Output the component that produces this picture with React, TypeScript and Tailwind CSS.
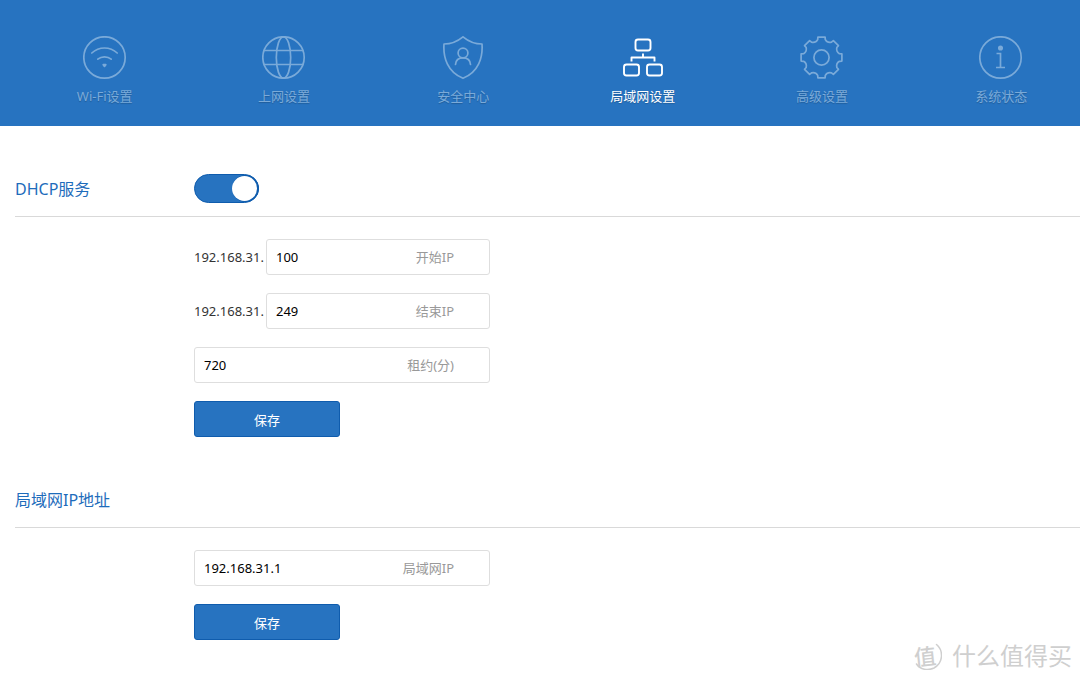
import React, { useState } from "react";

const navItems = [
  { id: "wifi", label: "Wi-Fi设置", icon: <WifiIcon /> },
  { id: "wan", label: "上网设置", icon: <GlobeIcon /> },
  { id: "safe", label: "安全中心", icon: <ShieldIcon /> },
  { id: "lan", label: "局域网设置", icon: <LanIcon /> },
  { id: "advanced", label: "高级设置", icon: <GearIcon /> },
  { id: "status", label: "系统状态", icon: <InfoIcon /> },
];

function Icon({ children }: { children: React.ReactNode }) {
  return (
    <svg
      width="44"
      height="44"
      viewBox="0 0 44 44"
      fill="none"
      stroke="currentColor"
      strokeWidth="1.7"
      strokeLinecap="round"
      strokeLinejoin="round"
      aria-hidden="true"
    >
      {children}
    </svg>
  );
}

function WifiIcon() {
  return (
    <Icon>
      <circle cx="21.5" cy="21.5" r="20.7" />
      <path d="M8.8 17C16 10.3 27 10.3 34.2 17" />
      <path d="M14.8 23.2C18.5 20 24.5 20 28.2 23.2" />
      <path d="M20.2 28.7h2.6l-1.3 1.7z" fill="currentColor" />
    </Icon>
  );
}

function GlobeIcon() {
  return (
    <Icon>
      <circle cx="21.5" cy="21.5" r="20.7" />
      <ellipse cx="21.5" cy="21.5" rx="7.2" ry="20.7" />
      <path d="M2.2 14.5h38.6M2.2 28.5h38.6" />
    </Icon>
  );
}

function ShieldIcon() {
  return (
    <Icon>
      <path d="M22 0.8C17.5 4.5 10.5 8 3 8C2 21.5 6.5 36 22 42.3C37.5 36 42 21.5 41 8C33.5 8 26.5 4.5 22 0.8z" />
      <circle cx="22" cy="17" r="4.9" />
      <path d="M14.5 28.5C14.8 24.5 17.5 21.9 22 21.9S29.2 24.5 29.5 28.5" />
    </Icon>
  );
}

function LanIcon() {
  return (
    <Icon>
      <g strokeWidth="1.9">
        <rect x="14.5" y="3.5" width="15" height="11" rx="2.5" />
        <rect x="3" y="28.5" width="15" height="11" rx="2.5" />
        <rect x="26" y="28.5" width="15" height="11" rx="2.5" />
        <path d="M22 17.5v4M10.5 25.5v-4h23v4" strokeLinecap="butt" />
      </g>
    </Icon>
  );
}

// eight teeth with a rounded valley between each pair
function gearPath() {
  const at = (r: number, deg: number) => {
    const a = ((deg - 90) * Math.PI) / 180;
    return `${(21.5 + r * Math.cos(a)).toFixed(2)} ${(21.5 + r * Math.sin(a)).toFixed(2)}`;
  };
  const teeth = [0, 45, 90, 135, 180, 225, 270, 315].map(
    (t) => `${at(20.7, t - 10)}L${at(20.7, t + 10)}L${at(18.3, t + 12)}Q${at(15.5, t + 22.5)} ${at(18.3, t + 33)}`
  );
  return `M${teeth.join("L")}z`;
}

function GearIcon() {
  return (
    <Icon>
      <circle cx="21.5" cy="21.5" r="7.6" />
      <path d={gearPath()} />
    </Icon>
  );
}

function InfoIcon() {
  return (
    <Icon>
      <circle cx="21.5" cy="21.5" r="20.7" />
      <circle cx="21.5" cy="12" r="1.7" fill="currentColor" />
      <path d="M17.5 17.5h4v14M17 31.5h9" strokeLinecap="butt" strokeLinejoin="miter" />
    </Icon>
  );
}

function Section({ title, action, children }: { title: string; action?: React.ReactNode; children: React.ReactNode }) {
  return (
    <section className="pl-[15px]">
      <div className="flex border-b border-[#d9d9d9] pt-12 pb-3">
        <h2 className="w-[179px] text-[16px] leading-[30px] text-[#1e6cbb]">{title}</h2>
        <div className="flex items-start">{action}</div>
      </div>
      <form className="flex flex-col items-start gap-[18px] pt-[22px] pl-[179px]" onSubmit={(e) => e.preventDefault()}>
        {children}
      </form>
    </section>
  );
}

function Field({ hint, value, prefix }: { hint: string; value: string; prefix?: string }) {
  return (
    <label className="flex w-[296px] items-center text-[13px] leading-5">
      {prefix && <span className="w-[72px] shrink-0 text-[#333]">{prefix}</span>}
      <span className="flex h-9 min-w-0 flex-1 items-center rounded-[3px] border border-[#dedede] pr-[35px] pl-[9px]">
        <input type="text" defaultValue={value} className="min-w-0 flex-1 text-black outline-none" />
        <span className="text-[#999]">{hint}</span>
      </span>
    </label>
  );
}

function SaveButton() {
  return (
    <button
      type="submit"
      className="h-9 w-[146px] rounded-[3px] border border-[#0f5cad] bg-[#2773c0] pt-0.5 text-[13px] leading-5 text-white"
    >
      保存
    </button>
  );
}

const App = () => {
  const [active, setActive] = useState("lan");
  const [dhcp, setDhcp] = useState(true);

  return (
    <div className="relative min-h-screen overflow-hidden bg-white font-['Noto_Sans','Noto_Sans_CJK_SC',sans-serif]">
      <nav className="bg-[#2773c0] pl-[15px]">
        <ul className="-mr-[11px] grid grid-cols-6">
          {navItems.map((item) => (
            <li key={item.id}>
              <button
                type="button"
                onClick={() => setActive(item.id)}
                className={`flex h-[126px] w-full flex-col items-center pt-9 text-[13px] [text-shadow:0_1px_1px_rgba(0,0,0,0.2)] ${
                  active === item.id ? "text-white" : "text-[#7aaad9]"
                }`}
              >
                {item.icon}
                <span className="mt-[6px] leading-5">{item.label}</span>
              </button>
            </li>
          ))}
        </ul>
      </nav>

      <main>
        <Section
          title="DHCP服务"
          action={
            <input
              type="checkbox"
              role="switch"
              aria-label="DHCP服务"
              checked={dhcp}
              onChange={(e) => setDhcp(e.target.checked)}
              className="flex h-[29px] w-[65px] appearance-none items-center rounded-full border border-[#0f5cad] bg-[#ccc] px-px before:size-[25px] before:rounded-full before:bg-white checked:justify-end checked:bg-[#2773c0] checked:before:shadow-[1px_0_0_1px_#0f5cad]"
            />
          }
        >
          <Field prefix="192.168.31." value="100" hint="开始IP" />
          <Field prefix="192.168.31." value="249" hint="结束IP" />
          <Field value="720" hint="租约(分)" />
          <SaveButton />
        </Section>

        <Section title="局域网IP地址">
          <Field value="192.168.31.1" hint="局域网IP" />
          <SaveButton />
        </Section>
      </main>

      {/* watermark */}
      <div className="pointer-events-none absolute right-2 bottom-2 flex items-center gap-[10px] text-[#cfcfcf]">
        <span className="relative flex size-7 items-center">
          <svg className="absolute inset-0" width="28" height="28" viewBox="0 0 28 28" fill="none" stroke="currentColor" aria-hidden="true">
            <path d="M22.5 2.5C30 9 29 21 20 26C14 29 6 27.5 2.5 22" strokeWidth="1.5" strokeLinecap="round" />
          </svg>
          <span className="-rotate-6 text-[22px] leading-7 font-medium">值</span>
        </span>
        <span className="text-[24px] leading-9">什么值得买</span>
      </div>
    </div>
  );
};

export default App;
